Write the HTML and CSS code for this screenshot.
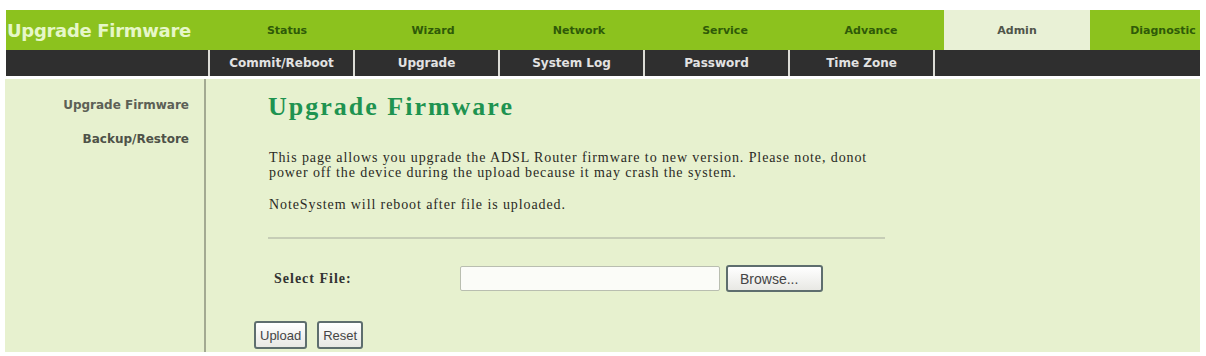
FILE: index.html
```html
<!DOCTYPE html>
<html>
<head>
<meta charset="utf-8">
<title>Upgrade Firmware</title>
<link rel="stylesheet" href="styles.css">
</head>
<body>
<div class="page">
  <div class="topbar">
    <div class="brand">Upgrade Firmware</div>
    <div class="tab">Status</div>
    <div class="tab">Wizard</div>
    <div class="tab">Network</div>
    <div class="tab">Service</div>
    <div class="tab">Advance</div>
    <div class="tab active">Admin</div>
    <div class="tab">Diagnostic</div>
  </div>
  <div class="subbar">
    <div class="sub-lead"></div>
    <div class="sub">Commit/Reboot</div>
    <div class="sub">Upgrade</div>
    <div class="sub">System Log</div>
    <div class="sub">Password</div>
    <div class="sub">Time Zone</div>
    <div class="sub-rest"></div>
  </div>
  <div class="content">
    <div class="sidebar">
      <div class="side-item">Upgrade Firmware</div>
      <div class="side-item">Backup/Restore</div>
    </div>
    <div class="main">
      <h1 class="heading">Upgrade Firmware</h1>
      <p class="desc">This page allows you upgrade the ADSL Router firmware to new version. Please note, donot<br>power off the device during the upload because it may crash the system.</p>
      <p class="note">NoteSystem will reboot after file is uploaded.</p>
      <div class="rule"></div>
      <div class="file-row">
        <span class="label">Select File:</span>
        <span class="file-input"></span>
        <span class="btn browse">Browse...</span>
      </div>
      <div class="actions">
        <span class="btn">Upload</span>
        <span class="btn">Reset</span>
      </div>
    </div>
  </div>
</div>
</body>
</html>
```
FILE: styles.css
```css
html, body {
  margin: 0;
  padding: 0;
  background: #ffffff;
}
.page {
  margin: 10px 6px 0 5px;
  width: 1195px;
  overflow: hidden;
}
.topbar {
  display: flex;
  height: 40px;
  background: #8cc21e;
  margin-left: 1px;
  font-family: "DejaVu Sans", Verdana, sans-serif;
  white-space: nowrap;
}
.brand {
  flex: 0 0 208px;
  padding-left: 1px;
  box-sizing: border-box;
  display: flex;
  align-items: center;
  font-size: 18px;
  font-weight: bold;
  color: #e6f7c8;
  letter-spacing: -0.3px;
}
.tab {
  flex: 0 0 146px;
  display: flex;
  align-items: center;
  justify-content: center;
  font-size: 11px;
  font-weight: bold;
  color: #2f5a08;
}
.tab.active {
  background: #e9f1d6;
  color: #50554a;
}
.subbar {
  display: flex;
  height: 26px;
  gap: 2px;
  background: #dcdcd6;
  margin-left: 1px;
  font-family: "DejaVu Sans", Verdana, sans-serif;
  white-space: nowrap;
}
.sub-lead {
  flex: 0 0 202px;
  background: #2f2f2f;
}
.sub {
  flex: 0 0 143px;
  background: #2f2f2f;
  color: #e2e2e2;
  font-size: 12px;
  font-weight: bold;
  display: flex;
  align-items: center;
  justify-content: center;
}
.sub-rest {
  flex: 1;
  background: #2f2f2f;
}
.content {
  margin-top: 3px;
  display: flex;
  height: 273px;
  background: #e7f1cf;
}
.sidebar {
  flex: 0 0 201px;
  border-right: 2px solid #a3aa92;
  padding: 18px 15px 0 0;
  box-sizing: border-box;
  font-family: "DejaVu Sans", Verdana, sans-serif;
  font-size: 12px;
  font-weight: bold;
  color: #4e5248;
  text-align: right;
}
.side-item {
  height: 16px;
  line-height: 16px;
  margin-bottom: 18px;
}
.side-item:first-child {
  color: #5c6056;
}
.main {
  flex: 1;
  padding-left: 62px;
  font-family: "Liberation Serif", "Times New Roman", serif;
  color: #333;
}
.heading {
  margin: 12px 0 0 0;
  font-size: 26px;
  line-height: 32px;
  font-weight: bold;
  letter-spacing: 2px;
  color: #1e9350;
}
.desc {
  margin: 27px 0 0 1px;
  font-size: 14px;
  line-height: 15px;
  letter-spacing: 0.9px;
  color: #2a2a24;
}
.note {
  margin: 17px 0 0 1px;
  font-size: 14px;
  line-height: 15px;
  letter-spacing: 0.9px;
  color: #2a2a24;
}
.rule {
  margin-top: 25px;
  width: 617px;
  height: 2px;
  background: #c6cdb6;
}
.file-row {
  margin-top: 27px;
  display: flex;
  align-items: center;
  height: 25px;
}
.label {
  margin-left: 6px;
  width: 186px;
  font-weight: bold;
  font-size: 14px;
  letter-spacing: 1px;
  color: #333;
}
.file-input {
  width: 258px;
  height: 23px;
  background: #fbfcf8;
  border: 1px solid #b9beb0;
  border-radius: 2px;
}
.btn {
  display: inline-flex;
  align-items: center;
  justify-content: center;
  box-sizing: border-box;
  height: 28px;
  padding: 0 4px;
  border: 2px solid #5e6e6e;
  border-radius: 3px;
  background: linear-gradient(#ffffff, #e8e8e4);
  font-family: "Liberation Sans", Arial, sans-serif;
  font-size: 13px;
  color: #454545;
}
.browse {
  margin-left: 6px;
  width: 97px;
  height: 27px;
  justify-content: flex-start;
  padding-left: 12px;
  font-size: 14px;
}
.actions {
  margin-top: 30px;
  margin-left: -14px;
  display: flex;
  gap: 10px;
}
```
